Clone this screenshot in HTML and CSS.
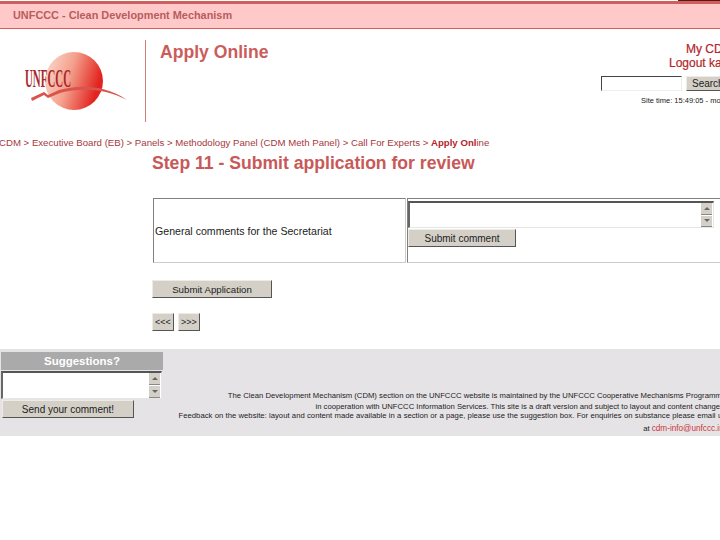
FILE: index.html
```html
<!DOCTYPE html>
<html lang="en">
<head>
<meta charset="utf-8">
<title>Apply Online</title>
<link rel="stylesheet" href="styles.css">
</head>
<body>
<div class="page">
  <div class="topline"><span class="corner"></span></div>
  <div class="banner">UNFCCC - Clean Development Mechanism</div>
  <header class="head">
    <div class="logo">
      <svg width="130" height="82" viewBox="0 0 130 82" aria-label="UNFCCC logo">
        <defs>
          <linearGradient id="ball" x1="0" y1="0" x2="1" y2="0.3">
            <stop offset="0" stop-color="#fae0d2"/>
            <stop offset="0.5" stop-color="#f4a08c"/>
            <stop offset="1" stop-color="#e2231f"/>
          </linearGradient>
        </defs>
        <circle cx="74" cy="41" r="29" fill="url(#ball)"/>
        <text x="25" y="47" class="logotext" textLength="46" lengthAdjust="spacingAndGlyphs">UNFCCC</text>
        <path d="M31 58 L44 52 L48 55 L59 50 C78 45 104 44 127 60 C104 48 80 48 60 53 L48 58 L44 55 L32 61 Z" fill="#d9544c"/>
      </svg>
    </div>
    <div class="headtitle">Apply Online</div>
    <div class="account">
      <a class="acct first">My CDM</a>
      <a class="acct">Logout ka</a>
      <div class="searchrow">
        <input class="searchbox" type="text" aria-label="Search">
        <button class="btn searchbtn">Search</button>
      </div>
      <div class="sitetime">Site time: 15:49:05 - mon</div>
    </div>
  </header>
  <nav class="crumbs">CDM &gt; Executive Board (EB) &gt; Panels &gt; Methodology Panel (CDM Meth Panel) &gt; Call For Experts &gt; <b>Apply Onl</b>ine</nav>
  <main class="main">
    <h1 class="step">Step 11 - Submit application for review</h1>
    <div class="formtable">
      <div class="cell labelcell">General comments for the Secretariat</div>
      <div class="cell inputcell">
        <div class="area widearea">
          <textarea class="areatext" aria-label="General comments"></textarea>
          <div class="scroll"><span class="arrow up"></span><span class="arrow down"></span></div>
        </div>
        <button class="btn commentbtn">Submit comment</button>
      </div>
    </div>
    <button class="btn appbtn">Submit Application</button>
    <div class="pager">
      <button class="btn pagebtn">&lt;&lt;&lt;</button>
      <button class="btn pagebtn">&gt;&gt;&gt;</button>
    </div>
  </main>
  <footer class="foot">
    <div class="suggest">
      <div class="suggesthead">Suggestions?</div>
      <div class="area smallarea">
        <textarea class="areatext" aria-label="Suggestions"></textarea>
        <div class="scroll"><span class="arrow up"></span><span class="arrow down"></span></div>
      </div>
      <button class="btn sendbtn">Send your comment!</button>
    </div>
    <div class="foottext">
      <p>The Clean Development Mechanism (CDM) section on the UNFCCC website is maintained by the UNFCCC Cooperative Mechanisms Programme</p>
      <p class="gap2">in cooperation with UNFCCC Information Services. This site is a draft version and subject to layout and content changes.</p>
      <p class="wide">Feedback on the website: layout and content made available in a section or a page, please use the suggestion box. For enquiries on substance please email us</p>
      <p class="mailline">at <a class="mail">cdm-info@unfccc.int</a></p>
    </div>
  </footer>
</div>
</body>
</html>
```
FILE: styles.css
```css
html, body { margin: 0; padding: 0; background: #fff; }
body { width: 720px; height: 540px; overflow: hidden; font-family: "Liberation Sans", Arial, sans-serif; color: #111; }
.page { width: 720px; overflow: hidden; }
.topline { height: 4px; box-sizing: border-box; border-top: 1px solid #fff; background: #cf5f5c; display: flex; justify-content: flex-end; }
.corner { width: 42px; height: 1px; margin-top: -1px; background: #5b1512; }
.banner { height: 25px; line-height: 23px; box-sizing: border-box; padding-left: 13px; background: #ffc9c9; border-bottom: 1px solid #cf5f5c; font-size: 10.9px; font-weight: bold; color: #b95c5c; }
.head { display: flex; height: 103px; width: 790px; }
.logo { width: 145px; height: 82px; margin-top: 11px; border-right: 1px solid #cf7c7a; flex: none; overflow: hidden; }
.logotext { font-family: "Liberation Serif", serif; font-weight: bold; font-size: 26px; fill: #a9282b; }
.headtitle { width: 440px; flex: none; padding: 13px 0 0 14px; font-size: 17.6px; font-weight: bold; color: #cc5c5c; line-height: 20px; }
.account { flex: none; width: 190px; font-size: 12px; margin-left: 1px; }
.acct { display: block; white-space: nowrap; color: #b3252a; line-height: 14px; -webkit-text-stroke: 0.2px #b3252a; }
.acct.first { margin: 13px 0 0 85px; }
.acct:not(.first) { margin: 0 0 0 68px; }
.searchrow { display: flex; margin-top: 6px; }
.searchbox { width: 81px; height: 15px; box-sizing: border-box; padding: 0; border: 1px solid #eee; border-top: 1px solid #444; border-left: 1px solid #444; background: #fff; }
.btn { font-family: "Liberation Sans", Arial, sans-serif; font-size: 10px; color: #222; background: #d4d0c8; padding: 0; border: 1px solid #d4d0c8; border-top-color: #eeeae4; border-left-color: #eeeae4; border-right-color: #555; border-bottom-color: #555; display: block; box-sizing: border-box; }
.searchbtn { width: 60px; height: 15px; margin-left: 4px; text-align: left; padding-left: 5px; }
.sitetime { margin: 5px 0 0 40px; font-size: 7.5px; line-height: 9px; white-space: nowrap; color: #222; }
.crumbs { width: 600px; height: 21px; line-height: 21px; margin-left: -1px; font-size: 9.65px; white-space: nowrap; color: #a5383c; }
.crumbs b { color: #b3252a; }
.main { padding-left: 152px; height: 196px; box-sizing: border-box; }
.step { margin: 0; font-size: 17.6px; line-height: 20px; font-weight: bold; color: #c95858; }
.formtable { display: flex; margin: 25px 0 0 1px; width: 590px; height: 65px; gap: 1px; }
.cell { box-sizing: border-box; height: 65px; border: 1px solid #ccc; border-top-color: #808080; border-left-color: #808080; }
.labelcell { width: 253px; display: flex; align-items: center; padding-left: 1px; font-size: 10.6px; color: #222; white-space: nowrap; }
.inputcell { width: 320px; padding: 2px 0 0 0; }
.area { display: flex; box-sizing: border-box; border: 1px solid #e6e6e6; border-top: 2px solid #555; border-left: 2px solid #666; background: #fff; }
.widearea { width: 306px; height: 27px; }
.smallarea { width: 161px; height: 28px; margin-top: 1px; }
.areatext { flex: 1; min-width: 0; border: 0; padding: 0; margin: 0; resize: none; overflow: hidden; background: #fff; }
.scroll { width: 11px; margin-right: 1px; flex: none; display: flex; flex-direction: column; gap: 1px; }
.arrow { flex: 1; background: #d4d0c8; border-bottom: 1px solid #888; display: flex; align-items: center; justify-content: center; }
.arrow::before { content: ""; width: 0; height: 0; border-left: 3px solid transparent; border-right: 3px solid transparent; }
.up::before { border-bottom: 3px solid #666; }
.down::before { border-top: 3px solid #666; }
.commentbtn { width: 108px; height: 18px; margin-top: 1px; }
.appbtn { width: 120px; height: 18px; margin-top: 17px; font-size: 9.7px; }
.pager { display: flex; gap: 4px; margin-top: 15px; }
.pagebtn { width: 22px; height: 18px; font-size: 9px; }
.foot { display: flex; height: 87px; background: #e6e3e6; width: 720px; }
.suggest { width: 162px; margin: 3px 0 0 1px; flex: none; }
.suggesthead { height: 18px; line-height: 18px; background: #aaa; color: #fff; text-align: center; font-size: 11.5px; font-weight: bold; }
.sendbtn { width: 132px; height: 18px; margin: 1px 0 0 1px; }
.foottext { flex: none; width: 567px; margin-left: -4px; font-size: 7.7px; color: #222; text-align: right; padding-top: 42px; }
.foottext p { margin: 0; line-height: 9px; white-space: nowrap; display: block; }
.foottext .gap2 { margin-top: 2px; }
.foottext .wide { word-spacing: 0.18px; }
.foottext .mailline { margin-top: 4px; }
.mail { color: #c8363c; font-size: 8.2px; }
```
